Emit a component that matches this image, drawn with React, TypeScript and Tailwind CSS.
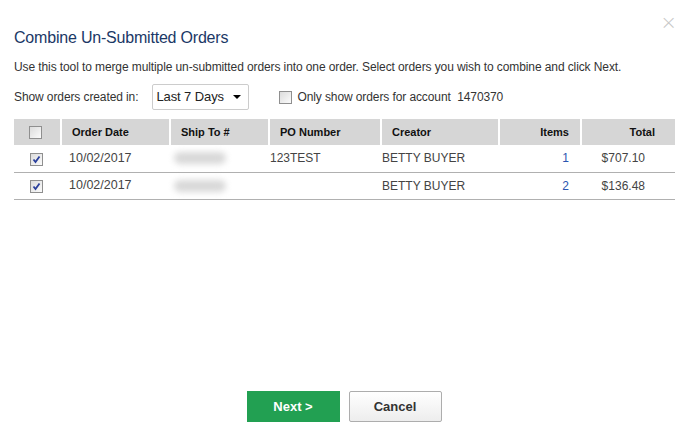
const sans = { fontFamily: '"Liberation Sans", Arial, sans-serif' };

const Box = ({ checked }: { checked?: boolean }) => (
  <span className="inline-flex h-[13px] w-[13px] items-center justify-center border border-[#8f8f8f] bg-gradient-to-br from-[#dcdcdc] to-[#fbfbfb]">
    {checked && (
      <svg width="9" height="9" viewBox="0 0 9 9">
        <path d="M1.5 4.5 L3.5 7 L7.5 1.5" fill="none" stroke="#2a3f9c" strokeWidth="1.8" />
      </svg>
    )}
  </span>
);

type Row = { date: string; po: string; items: string; total: string };

const rows: Row[] = [
  { date: "10/02/2017", po: "123TEST", items: "1", total: "$707.10" },
  { date: "10/02/2017", po: "", items: "2", total: "$136.48" },
];

export default function App() {
  return (
    <div className="relative h-[442px] w-[691px] bg-white px-[14px] text-[#333]" style={sans}>
      <button className="absolute right-[14px] top-[12px] text-[20px] font-light leading-none text-[#c8c8c8]" style={{ fontFamily: '"DejaVu Sans", sans-serif' }}>
        ×
      </button>

      <h1 className="pt-[28px] text-[16px] leading-[20px] tracking-[-0.2px] text-[#1b3866]">Combine Un-Submitted Orders</h1>
      <p className="mt-[12px] text-[12px] leading-[15px] tracking-[-0.1px] text-[#333]">
        Use this tool to merge multiple un-submitted orders into one order. Select orders you wish to combine and click Next.
      </p>

      <div className="mt-[9px] flex items-center text-[12px] tracking-[-0.1px]">
        <span>Show orders created in:</span>
        <div className="ml-[14px] flex h-[26px] w-[97px] items-center justify-between rounded-[2px] border border-[#ccc] pl-[3px] pr-[7px] text-[13px] text-[#222]">
          <span>Last 7 Days</span>
          <span className="h-0 w-0 border-x-[4px] border-t-[4px] border-x-transparent border-t-black" />
        </div>
        <span className="ml-[30px] flex items-center">
          <Box />
          <span className="ml-[5px]">Only show orders for account &nbsp;1470370</span>
        </span>
      </div>

      <table className="mt-[9px] w-[661px] border-collapse text-[12px]">
        <thead>
          <tr className="h-[26px] bg-[#d6d6d6] text-[11px] font-bold text-[#111]">
            <th className="w-[47px] border-r-2 border-white text-center">
              <span className="flex justify-center pr-[3px]">
                <Box />
              </span>
            </th>
            <th className="w-[109px] border-r-2 border-white pl-[10px] text-left">Order Date</th>
            <th className="w-[99px] border-r-2 border-white pl-[10px] text-left">Ship To #</th>
            <th className="w-[112px] border-r-2 border-white pl-[10px] text-left">PO Number</th>
            <th className="w-[118px] border-r-2 border-white pl-[10px] text-left">Creator</th>
            <th className="w-[82px] border-r-2 border-white pr-[11px] text-right">Items</th>
            <th className="pr-[20px] text-right">Total</th>
          </tr>
        </thead>
        <tbody>
          {rows.map((r, i) => (
            <tr key={i} className="h-[27px] border-b border-[#b0b0b0] text-[#444]">
              <td className="text-center">
                <span className="flex justify-center pr-[3px] pt-[2px]">
                  <Box checked />
                </span>
              </td>
              <td className="pl-[8px] text-[12.5px]">{r.date}</td>
              <td className="pl-[4px]">
                <div className="h-[12px] w-[52px] rounded-full bg-[#d8d8d8] blur-[3px]" />
              </td>
              <td className="pl-[1px]">{r.po}</td>
              <td className="pl-[1px]">BETTY BUYER</td>
              <td className="pr-[12px] text-right text-[#2a55b0]">{r.items}</td>
              <td className="pr-[30px] text-right">{r.total}</td>
            </tr>
          ))}
        </tbody>
      </table>

      <div className="absolute bottom-[20px] left-0 flex w-full justify-center gap-[9px] pr-[3px]">
        <button className="h-[31px] w-[93px] bg-[#22a052] text-[13px] font-bold text-white">Next &gt;</button>
        <button className="h-[31px] w-[93px] rounded-[2px] border border-[#adadad] bg-gradient-to-b from-white to-[#ededed] text-[13px] font-bold text-[#333]">
          Cancel
        </button>
      </div>
    </div>
  );
}
